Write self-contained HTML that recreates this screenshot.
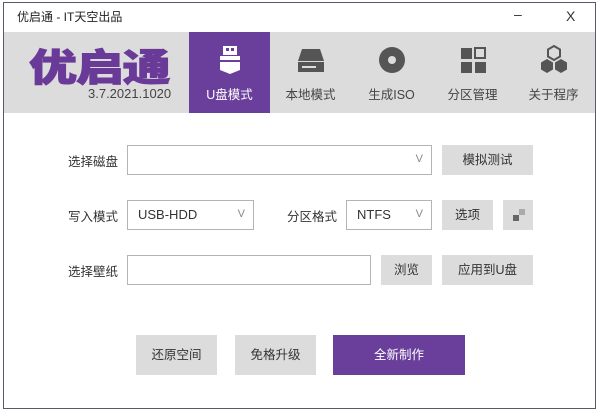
<!DOCTYPE html><html><head><meta charset="utf-8"><style>
*{margin:0;padding:0;box-sizing:border-box}
body{width:600px;height:412px;background:#fff;font-family:"Liberation Sans","Noto Sans CJK SC",sans-serif;font-size:13px;color:#333;position:relative;overflow:hidden}
.win{position:absolute;left:3px;top:2px;width:593px;height:407px;border:1px solid #5a5a66;background:#fff}
.a{position:absolute}
.hdr{left:4px;top:32px;width:591px;height:81px;background:#dcdcdc}
.tab{position:absolute;top:32px;width:81px;height:81px;text-align:center;color:#444;font-size:12.5px}
.tab .l{position:absolute;top:52px;left:0;width:100%}
.tab svg{position:absolute;left:24px;top:11px}
.box{position:absolute;border:1px solid #b4b4b4;background:#fff}
.btn{position:absolute;background:#dcdcdc;text-align:center;color:#333;font-size:12.5px}
.lab{position:absolute;font-size:12.5px;color:#333}
.v{position:absolute;right:8px;top:7px;color:#888;font-size:11px}
</style></head><body>
<div class="win"></div>
<div class="a" style="left:17px;top:8px;font-size:12px;color:#222">优启通 - IT天空出品</div>
<div class="a" style="left:514px;top:6px;font-size:14px;color:#333">–</div>
<div class="a" style="left:566px;top:8px;font-size:14px;color:#333">X</div>
<div class="a hdr"></div>
<div class="a" style="left:29px;top:38px;font-size:40px;font-weight:900;color:#6a3a99;letter-spacing:-1px;font-family:'Noto Sans CJK SC',sans-serif;line-height:54px;transform:scale(1.2,0.95);transform-origin:0 50%;-webkit-text-stroke:1px #6a3a99">优启通</div>
<div class="a" style="left:88px;top:86px;font-size:13px;color:#444">3.7.2021.1020</div>
<div class="tab" style="left:189px;background:#6a3f9b;color:#fff"><svg width="34" height="34" viewBox="0 0 34 34"><rect x="10" y="3" width="14" height="9" fill="#fff"/><rect x="13" y="5" width="3" height="3" fill="#6a3f9b"/><rect x="18" y="5" width="3" height="3" fill="#6a3f9b"/><path d="M7 13h20v4H7z" fill="#fff"/><path d="M7 19h20v8l-10 4-10-4z" fill="#fff"/></svg><div class="l">U盘模式</div></div>
<div class="tab" style="left:270px"><svg width="34" height="34" viewBox="0 0 34 34"><path d="M8 6h18l4 12H4z" fill="#555"/><rect x="4" y="19" width="26" height="10" fill="#555"/><rect x="8" y="23" width="14" height="2" fill="#ddd"/></svg><div class="l">本地模式</div></div>
<div class="tab" style="left:351px"><svg width="34" height="34" viewBox="0 0 34 34"><circle cx="17" cy="17" r="13" fill="#555"/><circle cx="17" cy="17" r="4" fill="#ddd"/></svg><div class="l">生成ISO</div></div>
<div class="tab" style="left:432px"><svg width="34" height="34" viewBox="0 0 34 34"><rect x="5" y="5" width="11" height="11" fill="#555"/><rect x="19" y="5" width="10" height="10" fill="none" stroke="#555" stroke-width="2"/><rect x="5" y="19" width="11" height="11" fill="#555"/><rect x="19" y="19" width="11" height="11" fill="#555"/></svg><div class="l">分区管理</div></div>
<div class="tab" style="left:513px"><svg width="34" height="34" viewBox="0 0 34 34"><polygon points="17,3 23,6.5 23,13.5 17,17 11,13.5 11,6.5" fill="none" stroke="#555" stroke-width="2"/><polygon points="10,16 16,19.5 16,26.5 10,30 4,26.5 4,19.5" fill="#555"/><polygon points="24,16 30,19.5 30,26.5 24,30 18,26.5 18,19.5" fill="#555"/></svg><div class="l">关于程序</div></div>

<div class="lab" style="left:68px;top:151px">选择磁盘</div>
<div class="box" style="left:127px;top:145px;width:305px;height:30px"><span class="v">V</span></div>
<div class="btn" style="left:442px;top:145px;width:91px;height:30px;line-height:30px">模拟测试</div>

<div class="lab" style="left:68px;top:206px">写入模式</div>
<div class="box" style="left:127px;top:200px;width:127px;height:30px"><span class="a" style="left:10px;top:6px;font-size:13px">USB-HDD</span><span class="v">V</span></div>
<div class="lab" style="left:287px;top:206px">分区格式</div>
<div class="box" style="left:346px;top:200px;width:86px;height:30px"><span class="a" style="left:10px;top:6px;font-size:13px">NTFS</span><span class="v">V</span></div>
<div class="btn" style="left:442px;top:200px;width:51px;height:30px;line-height:30px">选项</div>
<div class="btn" style="left:503px;top:200px;width:30px;height:30px"><div class="a" style="left:16px;top:9px;width:6px;height:6px;background:#aaa"></div><div class="a" style="left:10px;top:15px;width:6px;height:6px;background:#666"></div></div>

<div class="lab" style="left:68px;top:261px">选择壁纸</div>
<div class="box" style="left:127px;top:255px;width:244px;height:30px"></div>
<div class="btn" style="left:381px;top:255px;width:51px;height:30px;line-height:30px">浏览</div>
<div class="btn" style="left:442px;top:255px;width:91px;height:30px;line-height:30px">应用到U盘</div>

<div class="btn" style="left:136px;top:335px;width:81px;height:40px;line-height:40px">还原空间</div>
<div class="btn" style="left:235px;top:335px;width:81px;height:40px;line-height:40px">免格升级</div>
<div class="btn" style="left:333px;top:335px;width:132px;height:40px;line-height:40px;background:#6a3f9b;color:#fff">全新制作</div>
</body></html>
